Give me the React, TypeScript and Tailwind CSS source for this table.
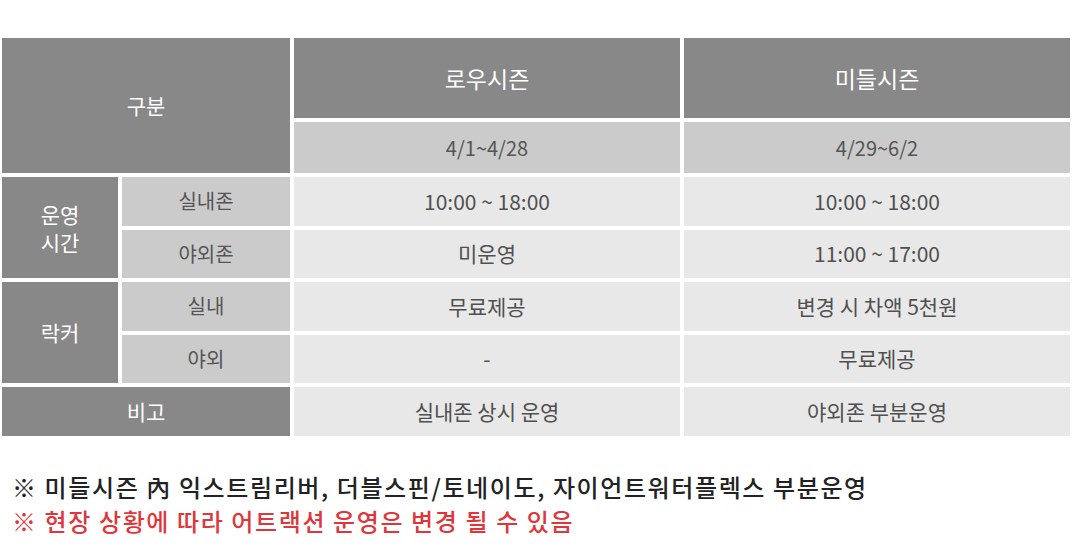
const font = { fontFamily: '"Noto Sans CJK KR", "Noto Sans", sans-serif' }

function Dark({ className = '', children }: { className?: string; children: React.ReactNode }) {
  return (
    <div className={`flex items-center justify-center bg-[#888888] text-white text-[21px] ${className}`}>
      {children}
    </div>
  )
}

function Light({ className = '', children }: { className?: string; children: React.ReactNode }) {
  return (
    <div className={`flex items-center justify-center bg-[#cbcbcb] text-[#555555] text-[20px] ${className}`}>
      {children}
    </div>
  )
}

function Cell({ children }: { children: React.ReactNode }) {
  return (
    <div className="flex items-center justify-center bg-[#e8e8e8] text-[#505050] text-[21px]">
      {children}
    </div>
  )
}

export default function App() {
  return (
    <div className="w-[1080px] h-[558px] bg-white overflow-hidden" style={font}>
      <div className="pl-[2px] pt-[38px]">
        <div className="grid grid-cols-[116px_168px_386px_386px] grid-rows-[80px_51px_48.5px_48.5px_48.5px_48.5px_49px] gap-x-[4px] gap-y-[4px] w-[1068px]">
          <Dark className="col-span-2 row-span-2">구분</Dark>
          <Dark className="text-[23px]">로우시즌</Dark>
          <Dark className="text-[23px]">미들시즌</Dark>
          <Light>4/1~4/28</Light>
          <Light>4/29~6/2</Light>

          <Dark className="row-span-2 flex-col leading-[28px]">
            <span>운영</span>
            <span>시간</span>
          </Dark>
          <Light>실내존</Light>
          <Cell>10:00 ~ 18:00</Cell>
          <Cell>10:00 ~ 18:00</Cell>
          <Light>야외존</Light>
          <Cell>미운영</Cell>
          <Cell>11:00 ~ 17:00</Cell>

          <Dark className="row-span-2">락커</Dark>
          <Light>실내</Light>
          <Cell>무료제공</Cell>
          <Cell>변경 시 차액 5천원</Cell>
          <Light>야외</Light>
          <Cell>-</Cell>
          <Cell>무료제공</Cell>

          <Dark className="col-span-2">비고</Dark>
          <Cell>실내존 상시 운영</Cell>
          <Cell>야외존 부분운영</Cell>
        </div>

        <div className="mt-[34px] pl-[10px] text-[24px] leading-[34px] tracking-[1.6px] font-medium">
          <p className="text-[#222222]">※ 미들시즌 內 익스트림리버, 더블스핀/토네이도, 자이언트워터플렉스 부분운영</p>
          <p className="text-[#e0353a]">※ 현장 상황에 따라 어트랙션 운영은 변경 될 수 있음</p>
        </div>
      </div>
    </div>
  )
}
